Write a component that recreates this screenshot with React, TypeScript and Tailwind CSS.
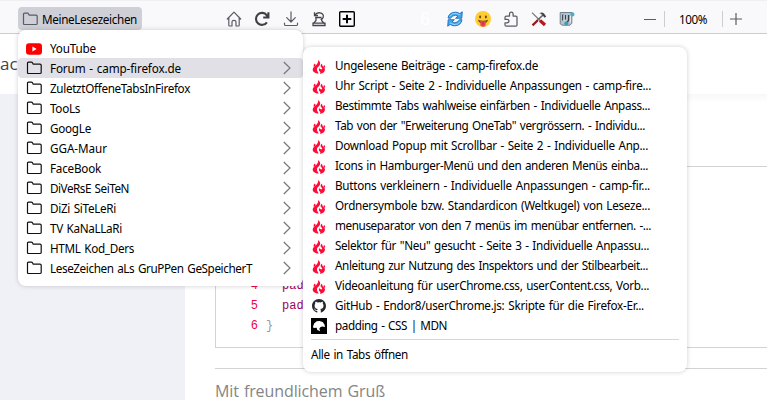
import { useLayoutEffect, useRef, useState } from "react";

function Fit({ text, width, className = "" }: { text: string; width: number; className?: string }) {
  const ref = useRef<HTMLSpanElement>(null);
  const [spacing, setSpacing] = useState(0);
  useLayoutEffect(() => {
    const natural = ref.current!.getBoundingClientRect().width;
    setSpacing((width - natural) / text.length);
  }, []);
  return (
    <span ref={ref} style={{ letterSpacing: `${spacing}px` }} className={`shrink-0 whitespace-pre ${className}`}>
      {text}
    </span>
  );
}

const folders: [string, number][] = [
  ["Forum - camp-firefox.de", 131],
  ["ZuletztOffeneTabsInFirefox", 140],
  ["TooLs", 30],
  ["GoogLe", 41],
  ["GGA-Maur", 57],
  ["FaceBook", 51],
  ["DiVeRsE SeiTeN", 79],
  ["DiZi SiTeLeRi", 66],
  ["TV KaNaLLaRi", 72],
  ["HTML Kod_Ders", 84],
  ["LeseZeichen aLs GruPPen GeSpeicherT", 202],
];

const bookmarks: [string, number][] = [
  ["Ungelesene Beiträge - camp-firefox.de", 203],
  ["Uhr Script - Seite 2 - Individuelle Anpassungen - camp-fire...", 316],
  ["Bestimmte Tabs wahlweise einfärben - Individuelle Anpass...", 315],
  ["Tab von der \"Erweiterung OneTab\" vergrössern. - Individu...", 310],
  ["Download Popup mit Scrollbar - Seite 2 - Individuelle Anp...", 313],
  ["Icons in Hamburger-Menü und den anderen Menüs einba...", 313],
  ["Buttons verkleinern - Individuelle Anpassungen - camp-fir...", 315],
  ["Ordnersymbole bzw. Standardicon (Weltkugel) von Leseze...", 315],
  ["menuseparator von den 7 menüs im menübar entfernen. -...", 316],
  ["Selektor für \"Neu\" gesucht - Seite 3 - Individuelle Anpassu...", 314],
  ["Anleitung zur Nutzung des Inspektors und der Stilbearbeit...", 313],
  ["Videoanleitung für userChrome.css, userContent.css, Vorb...", 314],
  ["GitHub - Endor8/userChrome.js: Skripte für die Firefox-Er...", 309],
  ["padding - CSS | MDN", 112],
];

const Folder = ({ className = "text-[#111]" }: { className?: string }) => (
  <svg viewBox="0 0 16 16" className={`h-4 w-4 shrink-0 ${className}`} fill="none" stroke="currentColor" strokeWidth="1.2">
    <path d="M1.5 12.5V3.2Q1.5 2.2 2.5 2.2H5.4Q6.2 2.2 6.6 3L7.2 4.2H14Q15.2 4.2 15.2 5.2V12.5Q15.2 13.5 14 13.5H2.5Q1.5 13.5 1.5 12.5Z" />
  </svg>
);

const YouTube = () => (
  <svg viewBox="0 0 16 16" className="h-4 w-4 shrink-0">
    <rect x="0" y="2.3" width="16" height="11.4" rx="3" fill="#f00" />
    <path d="M6.4 5.6v4.8l4.2-2.4z" fill="#fff" />
  </svg>
);

const Chevron = () => (
  <svg viewBox="0 0 8 14" className="h-3.5 w-2 shrink-0" fill="none" stroke="#777" strokeWidth="1.2">
    <path d="M.8 1L7 7L.8 13" />
  </svg>
);

const Flame = () => (
  <svg viewBox="0 0 16 16" className="h-4 w-4" fill="#ff0b37">
    <path d="M7.2 1C9.6 2.8 9.7 5.1 8.3 6.7C7.2 7.9 5.5 9 6 11C6.3 12.4 7.1 13 7.6 14.6C4 14.3 1.6 12.7 1.7 10.4C1.8 8.6 3.3 7.8 5 6.2C6.5 4.8 7.4 3.2 7.2 1Z" />
    <path d="M3.5 4.4Q5.4 5.6 4.2 7.2L2.8 8Q2 6.1 3.5 4.4Z" />
    <path d="M11.2 4.8C10.9 6.2 11.5 6.8 12.7 8C14.4 9.6 14.3 11.4 13 12.9C12 14 10.3 14.6 8.9 14.7C9.5 13.7 9.5 13.2 8.7 12.4C7.5 11.3 7.6 9.9 8.9 9C9.1 10.3 10 10.8 11 10.1C11.6 9.5 10.7 8.8 10 8C9.1 6.8 9.6 5.4 11.2 4.8ZM13.3 6.1Q14.8 7.5 13.9 9L12.6 7.5Q12.6 6.6 13.3 6.1Z" />
  </svg>
);

const GitHub = () => (
  <svg viewBox="0 0 16 16" className="h-4 w-4" fill="#24292f">
    <path d="M8 1C4.1 1 1 4.1 1 8c0 3.1 2 5.7 4.8 6.6.4.1.5-.1.5-.3v-1.4c-2 .4-2.4-.8-2.4-.8-.3-.8-.8-1-.8-1-.6-.5.1-.5.1-.5.7.1 1.1.8 1.1.8.6 1.1 1.6.8 2 .6.1-.5.3-.8.5-.9-1.6-.2-3.2-.8-3.2-3.5 0-.8.3-1.4.7-1.9-.1-.2-.3-.9.1-1.9 0 0 .6-.2 1.9.7a7 7 0 0 1 3.5 0c1.3-.9 1.9-.7 1.9-.7.4 1 .1 1.7.1 1.9.4.5.7 1.1.7 1.9 0 2.7-1.6 3.3-3.2 3.5.3.2.5.7.5 1.3v1.9c0 .2.1.4.5.3C13 13.7 15 11.1 15 8c0-3.9-3.1-7-7-7Z" />
  </svg>
);

const Mdn = () => (
  <svg viewBox="0 0 16 16" className="h-4 w-4">
    <rect width="16" height="16" fill="#000" />
    <path d="M2 8.7L3.1 5.4L5.8 3.3L8.5 2.9L11.7 4.1L13.5 6.5L14 9.1L11 8.6L9.3 9.3L8.3 10.8L9.2 13.2L6.3 12L5.6 9.8L2.6 10.1Z" fill="#fff" />
  </svg>
);

const Home = () => (
  <svg viewBox="0 0 16 16" className="h-4 w-4" fill="none" stroke="#5b5b66" strokeWidth="1.2" strokeLinejoin="round" strokeLinecap="round">
    <path d="M1.3 8L8 1.2L14.7 8M2.8 7V14.2Q2.8 15 3.6 15H6V10.8Q6 9.4 8 9.4T10 10.8V15H12.4Q13.2 15 13.2 14.2V7" />
  </svg>
);
const Reload = () => (
  <svg viewBox="0 0 16 16" className="h-4 w-4" fill="none" stroke="#3f3f46" strokeWidth="2.1">
    <path d="M12.9 11.3A6 6 0 1 1 12.8 4.3L14 6M14.4 1.2V6.5H9.2" />
  </svg>
);
const Download = () => (
  <svg viewBox="0 0 16 16" className="h-4 w-4" fill="none" stroke="#5b5b66" strokeWidth="1.2" strokeLinecap="round" strokeLinejoin="round">
    <path d="M8 .9V10.7M3.7 6.7L8 11L12.3 6.7M1.5 12V13.4Q1.5 14.5 2.7 14.5H13.3Q14.5 14.5 14.5 13.4V12" />
  </svg>
);
const Restore = () => (
  <svg viewBox="0 0 16 16" className="h-4 w-4" fill="none" stroke="#45454d" strokeWidth="1.3">
    <path d="M3.5 1.2V4.5H7M3.8 4.2C5.2 2 7 1.5 9 1.8C11.6 2.2 12.8 4 12.2 6.2C11.8 7.5 10.8 8.1 9.6 8.5M4.1 6.5H10.5M5 6.5V9.5L2.3 12.7M10.7 8.3V9.8L13.7 12.7M2 12.2H14V14.5H2Z" />
  </svg>
);
const Plus = () => (
  <svg viewBox="0 0 16 16" className="h-4 w-4" fill="none" stroke="#000">
    <rect x=".7" y=".7" width="14.6" height="14.6" rx="1" strokeWidth="1.4" />
    <path d="M8 3.7V12.3M3.7 8H12.3" strokeWidth="2" />
  </svg>
);
const Sync = () => (
  <svg viewBox="0 0 16 16" className="h-4 w-4" fill="#42a9ec" stroke="#1761b1" strokeWidth=".8" strokeLinejoin="round">
    <path d="M1 7Q2 1.2 8.5 1.2Q11 1.1 12.7 2.6L15.3 .8L14.8 7.3H8.6L11 5.1Q8.4 3.4 5.8 5L3.2 7.4Z" />
    <path d="M15 8.8Q14 14.8 7.5 14.8Q5 14.9 3.3 13.4L.7 15.2L1.2 8.7H7.4L5 10.9Q7.6 12.6 10.2 11L12.8 8.6Z" />
    <path d="M2.6 5.4Q5 1.9 9 2.4L13 3.8M13.4 10.4Q11 14.1 7 13.6L3 12" fill="none" stroke="#a6e0ff" />
  </svg>
);
const Smiley = () => (
  <svg viewBox="0 0 16 16" className="h-4 w-4">
    <circle cx="8" cy="8" r="8" fill="#ffcc32" />
    <ellipse cx="5.1" cy="6" rx="1" ry="1.4" fill="#664500" />
    <ellipse cx="10.9" cy="6" rx="1" ry="1.4" fill="#664500" />
    <path d="M2.9 8.8Q8 10.8 13.1 8.8Q12.3 12.3 8 12.3T2.9 8.8Z" fill="#75480a" />
    <path d="M5.3 10H10.7V13Q10.7 15.8 8 15.8T5.3 13Z" fill="#ed3f62" />
    <path d="M8 10.4V13.5" stroke="#bb1a34" strokeWidth=".7" />
  </svg>
);
const Puzzle = () => (
  <svg viewBox="0 0 16 16" className="h-4 w-4" fill="none" stroke="#5b5b66" strokeWidth="1.25" strokeLinejoin="round">
    <path d="M2 6.5Q2 5 3.4 5H6.5V3Q6.5 1 8.3 1T10.1 3V5H12.8Q14 5 14 6.2V14Q14 15.2 12.8 15.2H3.2Q2 15.2 2 14V11.8H4Q6 11.8 6 10.1T4 8.4H2Z" />
  </svg>
);
const Tools = () => (
  <svg viewBox="0 0 16 16" className="h-4 w-4" fill="none">
    <path d="M1 1.6L9.5 10" stroke="#777" strokeWidth="1.2" />
    <path d="M9 9.5L14 14" stroke="#b6181f" strokeWidth="3.2" />
    <path d="M12 4L5.6 10" stroke="#666" strokeWidth="1.7" />
    <path d="M6.8 9.2L1.5 14.4" stroke="#9c171b" strokeWidth="2.2" />
    <path d="M8.4 2.3Q11 .5 13 2.6L15.2 5.4L13.7 6.7L11.4 4.3Q10 2.5 8.4 2.3Z" fill="#444" />
  </svg>
);
const Script = () => (
  <svg viewBox="0 0 16 16" className="h-4 w-4" fill="none">
    <path d="M1.2 1.5H13L12.8 4V12.3L11 14.2H3.2L1.2 12.8Z" fill="#b5c3cc" stroke="#70818d" />
    <path d="M3.8 3.5V9.5M6.3 4V8.5M9.6 4V8.5Q9.6 10.3 8 11" stroke="#34414b" strokeWidth="1.4" />
    <path d="M11.4 4.5V11.5M5 4V10" stroke="#f1f6f8" strokeWidth=".9" />
    <circle cx="13.4" cy="3.4" r="2.1" fill="#55aac8" /><circle cx="7.3" cy="12.4" r="2" fill="#4199be" />
  </svg>
);

export default function App() {
  return (
    <div className="relative h-[400px] w-[767px] overflow-hidden bg-white font-['Noto_Sans','Open_Sans',sans-serif] text-[11.7px] text-black [word-spacing:1px]">
      <div className="flex h-[34px] items-start border-b border-[#ccccd1] bg-[#f9f9fb] shadow-[inset_0_1px_0_#f0f0f4]">
        <div className="ml-[18px] mt-[7px] flex h-[23px] w-[124px] shrink-0 items-center rounded-[4px] bg-[#cfcfd8] pl-1">
          <Folder className="text-[#5b5b66]" />
          <Fit text="MeineLesezeichen" width={95} className="ml-1 leading-4" />
        </div>
        <div className="ml-[84px] mt-[11px] flex w-[129px] shrink-0 justify-between">
          <Home /><Reload /><Download /><Restore /><Plus />
        </div>
        <div className="mt-[9px] w-[92px] shrink-0 pl-[65px] font-['Liberation_Sans',sans-serif] text-[18px] leading-5 text-white">6</div>
        <div className="mt-[11px] flex w-[128px] shrink-0 justify-between">
          <Sync /><Smiley /><Puzzle /><Tools /><Script />
        </div>
        <div className="ml-[69px] mt-[11px] flex h-4 shrink-0 items-center">
          <i className="h-px w-3 bg-[#5b5b66]" />
          <i className="ml-2 h-4 w-px bg-[#ccccd1]" />
          <div className="flex w-[57px] pl-[14px] pt-px"><Fit text="100%" width={28} /></div>
          <i className="h-4 w-px bg-[#ccccd1]" />
          <svg viewBox="0 0 12 12" className="ml-[7px] h-3 w-3" stroke="#5b5b66" strokeWidth="1.2"><path d="M6 0V12M0 6H12" /></svg>
        </div>
      </div>
      <div className="h-[60px] pt-[18px] font-['Open_Sans',sans-serif] text-[17px] leading-6 text-[#444]">ac</div>
      <div className="flex h-[306px] bg-[#f0f1f7]">
        <div className="w-[185px] shrink-0" />
        <div className="min-w-0 flex-1 bg-[linear-gradient(#f8f8f9,#ffffff_9px)] pl-[30px]">
          <div className="mt-[72px] h-[182px] border border-r-0 border-[#d3d3d3] pt-[109px] font-['Liberation_Mono',monospace] text-[12px] leading-5">
            {[4, 5, 6].map((n) => (
              <div key={n} className="flex h-5">
                <span className="w-[42px] text-right text-[#f00045]">{n}</span>
                {n < 6 ? <span className="ml-6 text-[#a00060]">padding:</span> : <span className="ml-2 text-[#999]">{"}"}</span>}
              </div>
            ))}
          </div>
          <div className="mt-5 h-px bg-[#d3d3d3]" />
          <div className="flex pt-[13px] font-['Open_Sans',sans-serif] text-[16px] leading-[18px] text-[#858585]">
            <Fit text="Mit freundlichem Gruß" width={170} />
          </div>
        </div>
      </div>

      <div className="absolute left-[18px] top-[30px] h-[256px] w-[285px] rounded-[8px] bg-white pt-2 shadow-[0_0_4px_rgba(58,57,68,0.25)]">
        <div className="flex h-5 items-center pl-2"><span className="pt-0.5"><YouTube /></span><Fit text="YouTube" width={46} className="ml-2 pt-px" /></div>
        {folders.map(([name, width], i) => (
          <div key={name} className={`flex h-5 items-center rounded-[4px] pl-2 pr-3 ${i === 0 ? "bg-[#e0e0e6]" : ""}`}>
            <Folder /><Fit text={name} width={width} className="ml-2 pt-px" />
            <span className="ml-auto"><Chevron /></span>
          </div>
        ))}
      </div>

      <div className="absolute left-[303px] top-[47px] h-[325px] w-[384px] rounded-[8px] bg-white px-2 pt-[9px] shadow-[0_0_4px_rgba(58,57,68,0.25)]">
        {bookmarks.map(([name, width], i) => (
          <div key={name} className="flex h-5 items-center">
            {i < 12 ? <span className="pt-0.5"><Flame /></span> : i === 12 ? <GitHub /> : <Mdn />}
            <Fit text={name} width={width} className="ml-2" />
          </div>
        ))}
        <div className="mt-[3px] h-px bg-[#d8d8dc]" />
        <div className="flex pt-1 leading-5"><Fit text="Alle in Tabs öffnen" width={97} /></div>
      </div>
    </div>
  );
}
